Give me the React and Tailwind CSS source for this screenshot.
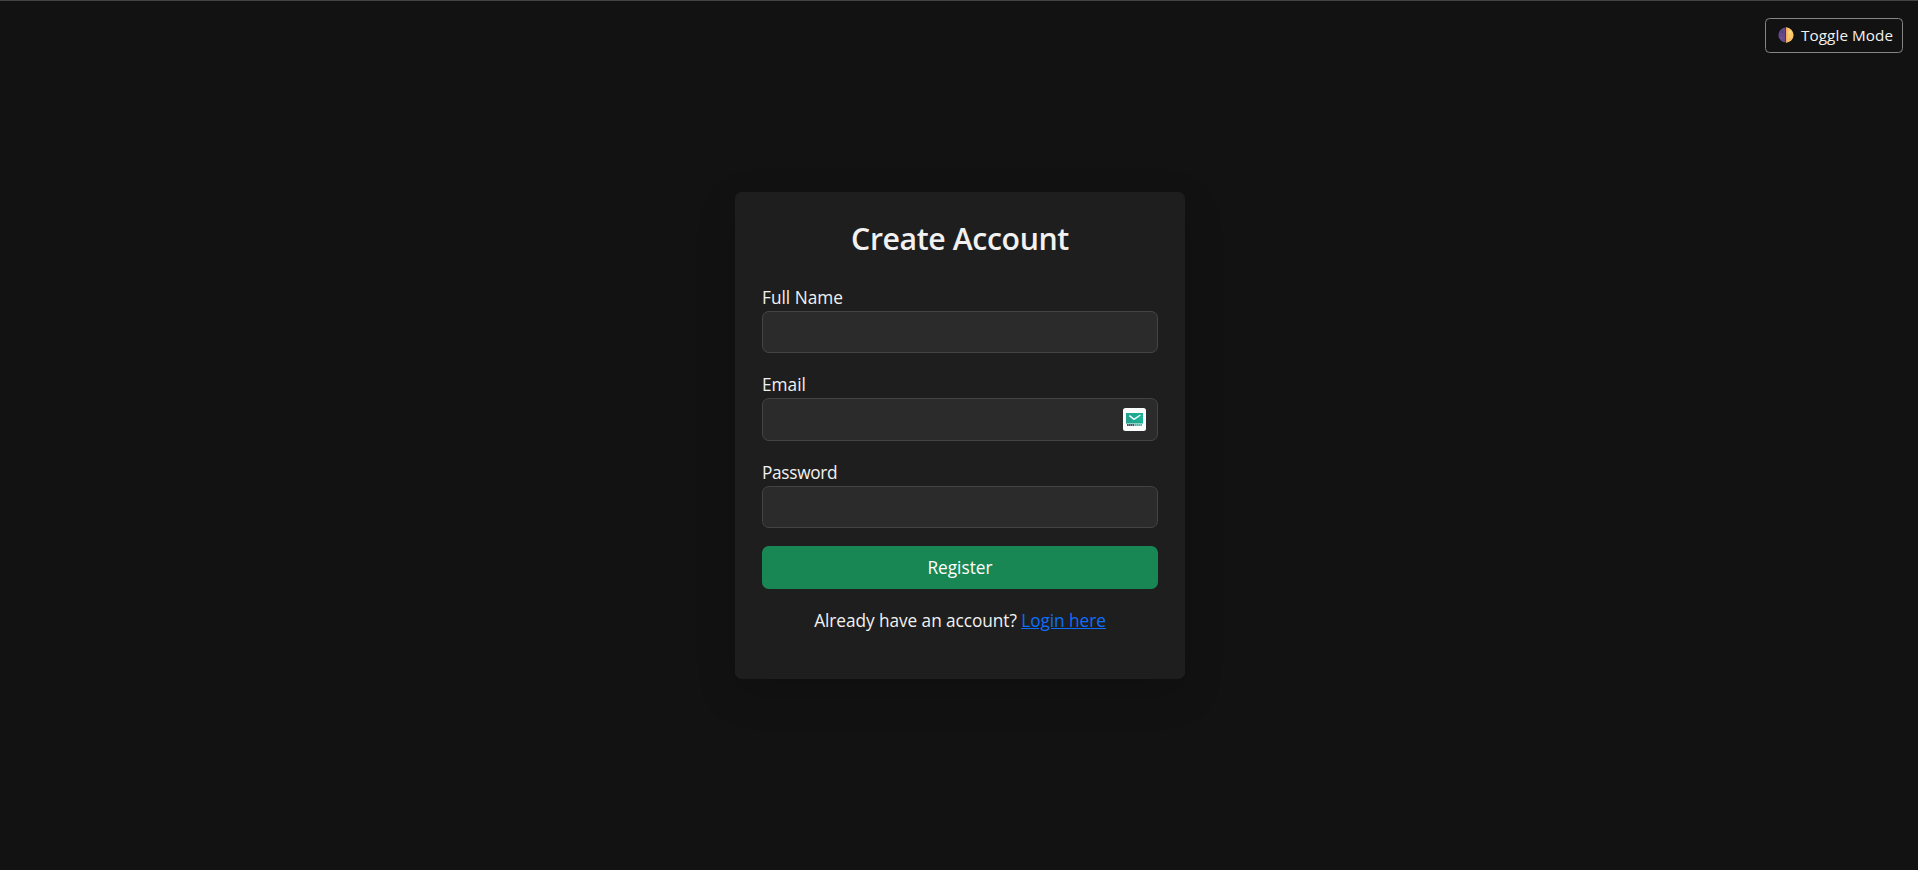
const fieldClass =
  "block w-full rounded-[6.75px] border border-[#444444] bg-[#2b2b2b] px-3.5 text-[17px] text-[#f1f1f1] outline-none";

function HalfMoon() {
  return (
    <svg className="size-4 shrink-0" viewBox="0 0 16 16" aria-hidden="true">
      <path d="M8 .4a7.6 7.6 0 0 0 0 15.2z" fill="#62488a" />
      <path d="M8 .4a7.6 7.6 0 0 1 0 15.2z" fill="#fbc568" />
      <path d="M7 .5h1v15H7z" fill="#4b2c70" />
      <path d="M8 .5h1.5v15H8z" fill="#f3ad62" />
      <circle cx="4.2" cy="5" r="1.2" fill="#50407a" />
      <circle cx="3.7" cy="11" r="1.3" fill="#73528d" />
      <circle cx="12" cy="5" r="1.5" fill="#ffd981" />
      <circle cx="11.5" cy="12" r="1" fill="#eeb468" />
    </svg>
  );
}

function TempMailIcon() {
  return (
    <svg className="size-[23px]" viewBox="0 0 23 23" aria-hidden="true">
      <rect width="23" height="23" rx="2.5" fill="#fbfdfd" />
      <path d="M3 5h17v10.5H3z" fill="#1fa892" />
      <path d="M3 5l8.5 6.5L3 15.5z" fill="#26a08f" />
      <path d="M20 5l-8.5 6.5L20 15.5z" fill="#1bb394" />
      <path d="M6.4 7.7l4.6 3.7 6.4-4.4" fill="none" stroke="#f2fffc" strokeWidth="1.5" />
      <path d="M4 17h7.3" stroke="#48516a" strokeWidth="2" strokeDasharray="1.6 .3" />
      <path d="M11.7 17h7.5" stroke="#49b8a4" strokeWidth="2" strokeDasharray="1.6 .3" />
    </svg>
  );
}

export default function App() {
  return (
    <div className="relative flex h-[870px] w-full flex-col items-center border-t border-[#444444] bg-[#121212] pt-[191px] pl-0.5 font-['Open_Sans','Noto_Sans',sans-serif] text-[17.25px] leading-[27px] text-[#f1f1f1]">
      <button
        type="button"
        className="absolute top-[17px] right-[15px] flex h-[35px] w-[138px] items-center gap-[7px] rounded-[4.5px] border border-[#868686] pb-px pl-3 text-[15.25px] leading-6 tracking-[0.08px] whitespace-nowrap text-[#f1f1f1]"
      >
        <HalfMoon />
        <span>Toggle Mode</span>
      </button>

      <main className="h-[487px] w-[450px] rounded-[6.75px] bg-[#1e1e1e] px-[27px] pt-7 shadow-[0_14px_40px_rgba(0,0,0,0.16)]">
        <h1 className="text-center text-[30.25px] leading-[38px] font-semibold tracking-[-0.4px]">
          Create Account
        </h1>

        <form className="mt-[26px]" onSubmit={(e) => e.preventDefault()}>
          <label htmlFor="name" className="block">
            Full Name
          </label>
          <input id="name" type="text" className={`h-[42px] ${fieldClass}`} />

          <label htmlFor="email" className="mt-[18px] block">
            Email
          </label>
          <div className="relative">
            <input id="email" type="email" className={`h-[43px] ${fieldClass}`} />
            <span className="absolute top-[10px] right-3">
              <TempMailIcon />
            </span>
          </div>

          <label htmlFor="password" className="mt-[18px] block tracking-[-0.3px]">
            Password
          </label>
          <input id="password" type="password" className={`h-[42px] ${fieldClass}`} />

          <button
            type="submit"
            className="mt-[18px] block h-[43px] w-full rounded-[6.75px] bg-[#198754] text-center text-white"
          >
            Register
          </button>
        </form>

        <p className="mt-[18px] text-center tracking-[-0.06px] whitespace-nowrap">
          Already have an account?{" "}
          <a href="#login" className="tracking-[-0.06px] text-[#0d6efd] underline">
            Login here
          </a>
        </p>
      </main>
    </div>
  );
}
